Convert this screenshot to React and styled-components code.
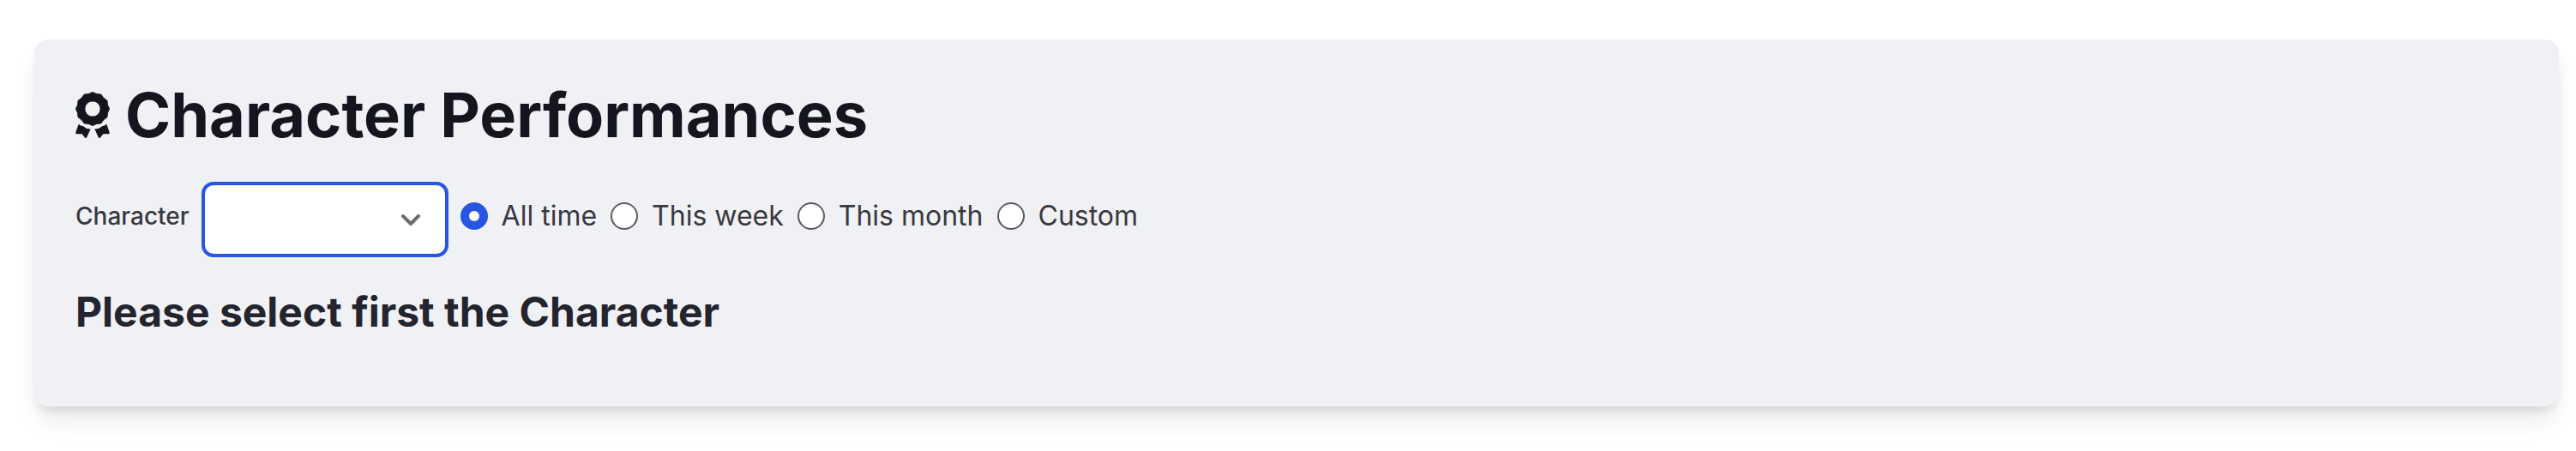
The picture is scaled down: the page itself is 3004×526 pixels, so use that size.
import React, { useState } from "react";
import styled, { createGlobalStyle } from "styled-components";

const GlobalStyle = createGlobalStyle`
  *, *::before, *::after {
    box-sizing: border-box;
  }
  body {
    margin: 0;
    background: #ffffff;
    color: #383841;
    font-family: Inter, "Liberation Sans", sans-serif;
    font-size: 32px;
    line-height: 48px;
  }
`;

const Page = styled.main`
  padding: 46px 20px 52px 40px;
`;

const Card = styled.section`
  padding: 48px 48px 82px;
  border-radius: 16px;
  background: #f0f1f4;
  box-shadow:
    0 20px 30px -6px rgba(0, 0, 0, 0.1),
    0 8px 12px -4px rgba(0, 0, 0, 0.1);
`;

const Title = styled.h1`
  display: flex;
  align-items: center;
  gap: 16px;
  margin: 0;
  color: #14151f;
  font-size: 72px;
  font-weight: 700;
  line-height: 80px;
`;

const AwardSvg = styled.svg`
  flex: none;
  width: 42px;
  height: 54px;
  fill: currentColor;
`;

const Filters = styled.form`
  display: flex;
  align-items: center;
  gap: 14px;
  margin: 30px 0 36px;
`;

const FieldLabel = styled.label`
  font-size: 28px;
  font-weight: 500;
  line-height: 40px;
`;

const SelectBox = styled.div`
  display: grid;
  align-items: center;
  width: 288px;
  padding-top: 8px;

  > * {
    grid-area: 1 / 1;
  }
`;

const Select = styled.select`
  appearance: none;
  width: 100%;
  height: 88px;
  padding: 0 64px 0 24px;
  border: 4px solid #2855e2;
  border-radius: 14px;
  outline: none;
  background: #ffffff;
  color: inherit;
  font: inherit;
`;

const Chevron = styled.svg`
  justify-self: end;
  width: 24px;
  height: 16px;
  margin-right: 32px;
  fill: none;
  stroke: #6b6c72;
  stroke-width: 4;
  stroke-linecap: round;
  stroke-linejoin: round;
  pointer-events: none;
`;

const Periods = styled.div`
  display: flex;
  align-items: center;
  gap: 16px;
`;

const Period = styled.label`
  display: flex;
  align-items: center;
  gap: 16px;
`;

const Radio = styled.input`
  appearance: none;
  flex: none;
  width: 32px;
  height: 32px;
  margin: 0;
  border: 2px solid #5c5d63;
  border-radius: 50%;
  background: #ffffff;

  &:checked {
    border: 10px solid #2855e2;
  }
`;

const Notice = styled.h2`
  margin: 0;
  color: #23242d;
  font-size: 48px;
  font-weight: 700;
  line-height: 56px;
`;

const PERIODS = ["All time", "This week", "This month", "Custom"];

// Twelve-pointed rosette: tips and shallow valleys alternate every 15 degrees.
const ROSETTE = Array.from({ length: 24 }, (_, i) => {
  const radius = i % 2 === 0 ? 19.6 : 18.2;
  const angle = (i * Math.PI) / 12;
  const x = 20 + radius * Math.sin(angle);
  const y = 20 - radius * Math.cos(angle);
  return `${x.toFixed(2)} ${y.toFixed(2)}`;
}).join("L");

const RIBBON =
  "M3.8 37.6Q5 39.6 7 39.8Q9.5 40 10.8 41.6Q12.5 43.4 17.6 43.6L13.2 53.2Q12 54.8 10.8 53.3L7.6 49.3L1.8 49.2Q-.3 49 .4 47Z";

function AwardIcon() {
  return (
    <AwardSvg viewBox="0 0 42 54" aria-hidden="true">
      <path
        fillRule="evenodd"
        stroke="currentColor"
        strokeWidth="0.8"
        strokeLinejoin="round"
        d={`M${ROSETTE}ZM20 10.9a9.1 9.1 0 1 0 0 18.2a9.1 9.1 0 1 0 0-18.2Z`}
      />
      <path d={RIBBON} />
      <path d={RIBBON} transform="matrix(-1 0 0 1 40 0)" />
    </AwardSvg>
  );
}

export default function App() {
  const [period, setPeriod] = useState(PERIODS[0]);

  return (
    <>
      <GlobalStyle />
      <Page>
        <Card>
          <Title>
            <AwardIcon />
            Character Performances
          </Title>
          <Filters>
            <FieldLabel htmlFor="character">Character</FieldLabel>
            <SelectBox>
              <Select id="character" />
              <Chevron viewBox="0 0 24 16" aria-hidden="true">
                <path d="M3 4l9 9 9-9" />
              </Chevron>
            </SelectBox>
            <Periods role="radiogroup" aria-label="Period">
              {PERIODS.map((name) => (
                <Period key={name}>
                  <Radio
                    type="radio"
                    name="period"
                    value={name}
                    checked={period === name}
                    onChange={() => setPeriod(name)}
                  />
                  {name}
                </Period>
              ))}
            </Periods>
          </Filters>
          <Notice>Please select first the Character</Notice>
        </Card>
      </Page>
    </>
  );
}
